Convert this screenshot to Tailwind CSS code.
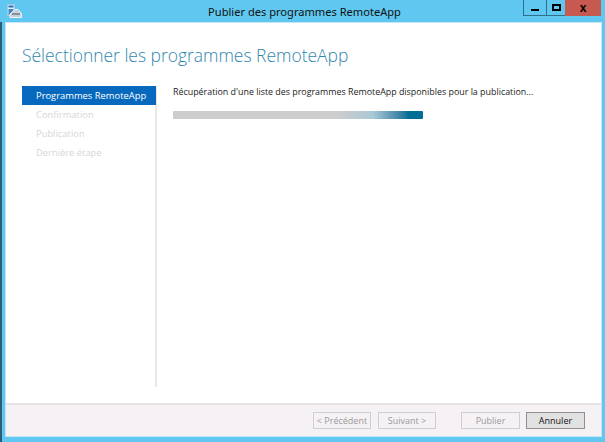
<!DOCTYPE html>
<html lang="fr">
<head>
<meta charset="utf-8">
<script src="https://cdn.jsdelivr.net/npm/@tailwindcss/browser@4"></script>
</head>
<body class="bg-[#60c8f0]">
<div class="w-[605px] h-[442px] overflow-hidden flex bg-[#60c8f0] font-['Open_Sans','Noto_Sans',sans-serif] antialiased">
  <div class="w-[2px] mt-[22px] bg-[#2f5d78]"></div>
  <div class="flex-1 flex flex-col pl-[4px] pr-[4px]">
    <header class="h-[23px] shrink-0 flex items-start relative">
      <svg class="ml-[1px] mt-[4px] shrink-0" width="15" height="14" viewBox="0 0 15 14">
        <rect x="0.5" y="0.5" width="7" height="11" fill="#dff2fb" stroke="#9ccbe6"/>
        <rect x="1.5" y="1.5" width="5" height="2" fill="#2a6fb4"/>
        <rect x="1.5" y="5" width="5" height="6" fill="#3d85c6"/>
        <path d="M3 13.5 V10 L8 5.5 H11 L14.5 10 V13.5 Z" fill="#c9cfd6" stroke="#eef6fb"/>
        <path d="M5 10 H13" stroke="#6d7f8e" stroke-width="1.5"/>
      </svg>
      <h1 class="flex-1 text-center text-[11.1px] leading-[16px] mt-[4px] text-[#111] pr-[14px] font-['Noto_Sans','Open_Sans',sans-serif]">Publier des programmes RemoteApp</h1>
      <div class="absolute right-[0px] top-0 flex h-[16px]">
        <button class="w-[23px] border-l border-b border-[#2f6f8f] flex items-center justify-center"><span class="block w-[8px] h-[2px] mt-[4px] bg-black"></span></button>
        <button class="w-[19px] border-l border-b border-[#2f6f8f] flex items-center justify-center"><span class="block w-[9px] h-[7px] border-2 border-black"></span></button>
        <button class="w-[36px] bg-[#c75a50] flex items-center justify-center text-[12px] font-bold text-black leading-none font-['Liberation_Sans',sans-serif]">x</button>
      </div>
    </header>
    <main class="flex-1 flex flex-col bg-white min-h-0 shadow-[0_0_0_1px_#c4e6f5]">
      <h2 class="h-[36px] shrink-0 ml-[16px] mt-[20px] text-[17.45px] font-light leading-[24px] text-[#2f86ad] font-['Open_Sans',sans-serif]">Sélectionner les programmes RemoteApp</h2>
      <div class="flex flex-1 min-h-0 mt-[7px]">
        <nav class="w-[135px] ml-[16px] mb-[16px] shrink-0 border-r-2 border-[#e8e8e8] text-[9.4px] leading-[19px] text-[#d6d6d6]">
          <div class="h-[19px] bg-[#0669bd] text-white pl-[14px] -mr-[1px]">Programmes RemoteApp</div>
          <div class="pl-[14px]">Confirmation</div>
          <div class="pl-[14px]">Publication</div>
          <div class="pl-[14px]">Dernière étape</div>
        </nav>
        <section class="flex-1 pl-[16px] text-[#222]">
          <p class="text-[8.9px] leading-[14px] -mt-[1px] whitespace-nowrap">Récupération d'une liste des programmes RemoteApp disponibles pour la publication...</p>
          <div class="mt-[12px] w-[250px] h-[8px] rounded-[1px] bg-gradient-to-r from-[#cdcdcd] from-[66%] via-[#a9c9d6] via-[80%] to-[#006f96] to-[94%]"></div>
        </section>
      </div>
      <footer class="h-[33px] shrink-0 border-t-2 border-[#e4e4e4] bg-[#f5f1f5] flex items-center justify-end pr-[16px] text-[9px] leading-none">
        <button class="w-[58px] h-[17px] border border-[#cfcfcf] text-[#9a9a9a]">&lt; Précédent</button>
        <button class="w-[58px] h-[17px] border border-[#cfcfcf] text-[#9a9a9a] ml-[7px]">Suivant &gt;</button>
        <button class="w-[59px] h-[17px] border border-[#cfcfcf] text-[#9a9a9a] ml-[25px]">Publier</button>
        <button class="w-[59px] h-[17px] border border-[#8f8f8f] bg-[#e1e1e1] text-[#111] ml-[6px]">Annuler</button>
      </footer>
    </main>
    <div class="h-[6px] shrink-0"></div>
  </div>
</div>
</body>
</html>
